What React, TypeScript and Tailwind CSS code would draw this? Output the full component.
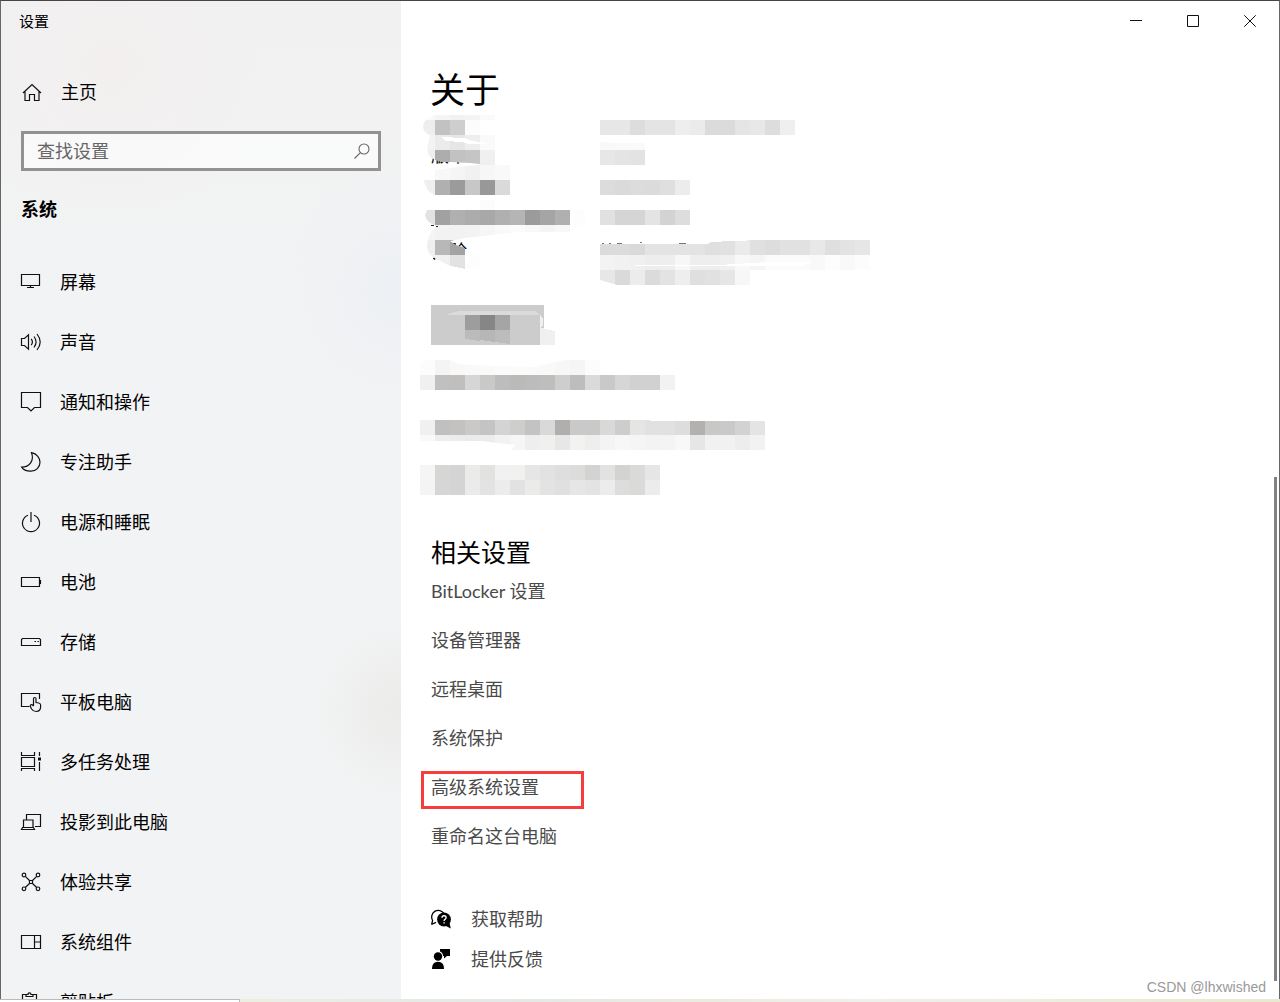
import React from 'react';

interface NavItem {
  label: string;
  icon: React.ReactNode;
}

interface MosaicProps {
  id: string;
  // one string per 15px row, grey cells as two hex digits, tinted cells as six
  rows: string[];
  clip?: string;
  children?: React.ReactNode;
  under?: React.ReactNode;
}

const CELL = 15;

const toColor = (cell: string) => (cell.length === 2 ? `#${cell}${cell}${cell}` : `#${cell}`);

/**
 * Pixelated block used in place of private values
 */
const Mosaic: React.FC<MosaicProps> = ({ id, rows, clip, children, under }) => {
  const grid = rows.map((row) => row.split(' ').filter(Boolean));
  const width = Math.max(...grid.map((row) => row.length)) * CELL;
  const height = grid.length * CELL;

  return (
    <svg
      width={width}
      height={height}
      viewBox={`0 0 ${width} ${height}`}
      shapeRendering="crispEdges"
      className="block shrink-0"
      aria-hidden="true"
    >
      {under}
      {clip && (
        <clipPath id={id}>
          <path d={clip} />
        </clipPath>
      )}
      <g clipPath={clip ? `url(#${id})` : undefined}>
        {grid.map((row, y) =>
          row.map((cell, x) =>
            cell === '--' ? null : (
              <rect
                key={`${x}-${y}`}
                x={x * CELL}
                y={y * CELL}
                width={CELL}
                height={CELL}
                fill={toColor(cell)}
              />
            )
          )
        )}
      </g>
      {children}
    </svg>
  );
};

const LineIcon: React.FC<{ children: React.ReactNode }> = ({ children }) => (
  <svg
    width="20"
    height="20"
    viewBox="0 0 20 20"
    fill="none"
    stroke="#111"
    strokeWidth="1.2"
    className="shrink-0 overflow-visible"
    aria-hidden="true"
  >
    {children}
  </svg>
);

const navItems: NavItem[] = [
  {
    label: '屏幕',
    icon: <path d="M.5 2.5H18.5V13.5H.5ZM9.5 13.5V15.5M6 15.5H13" />,
  },
  {
    label: '声音',
    icon: (
      <path d="M.5 6.5H3.5L7.5 2.8V17.2L3.5 13.5H.5ZM10.2 6.8Q12.6 10 10.2 13.2M13 4.5Q17.2 10 13 15.5M16 2Q22.4 10 16 18" />
    ),
  },
  {
    label: '通知和操作',
    icon: <path d="M.5 .5H19.5V15.5H13.5L10 19L6.5 15.5H.5Z" />,
  },
  {
    label: '专注助手',
    icon: <path d="M10.5 .7C16 1.8 19 6 19 10.2A9 9 0 0 1 10 19.2C6 19.4 2.4 17.8 .7 15.2C8.5 15.2 13.5 8.5 10.5 .7Z" />,
  },
  {
    label: '电源和睡眠',
    icon: <path d="M7 3.2A8.5 8.5 0 1 0 13 3.2M10 0V10" />,
  },
  {
    label: '电池',
    icon: (
      <>
        <path d="M.5 5.5H18.5V14.5H.5Z" />
        <path d="M19.5 8V12" />
      </>
    ),
  },
  {
    label: '存储',
    icon: (
      <>
        <path d="M.5 13.5V7.5L1.5 6.5H18.5L19.5 7.5V13.5Z" />
        <path d="M13.5 9.5H15M16.5 9.5H18" />
      </>
    ),
  },
  {
    label: '平板电脑',
    icon: (
      <>
        <path d="M8.5 14.5H.5V1.5H18.5V7" />
        <path d="M12.5 14V6.8Q12.5 5.5 13.7 5.5Q15 5.5 15 6.8V10.5L17.8 11Q19.6 11.4 19.6 13V14.8Q19.6 19.5 15.2 19.5Q12.2 19.5 10.6 17L9.4 14.6Q8.9 13.2 9.8 12.8Q11 12.4 12.5 14" />
      </>
    ),
  },
  {
    label: '多任务处理',
    icon: (
      <>
        <path d="M.5 0V3.5H13.5V0M.5 5.5H13.5V14.5H.5ZM.5 19V16.5H13.5V19M18.5 0V4M18.5 10V19" />
        <rect x="17" y="5.5" width="3" height="3" fill="#111" stroke="none" />
      </>
    ),
  },
  {
    label: '投影到此电脑',
    icon: <path d="M5.5 7.5V2.5H19.5V14.5H14M2.5 15.5V8H12V15.5M1.5 15.5H12.5L13.5 17.5H.5Z" />,
  },
  {
    label: '体验共享',
    icon: (
      <>
        <circle cx="3" cy="3" r="1.8" />
        <circle cx="17" cy="3" r="1.8" />
        <circle cx="3" cy="16.8" r="1.8" />
        <circle cx="17" cy="16.8" r="1.8" />
        <path d="M8.5 8.5H11.5V11.5H8.5ZM4.3 4.3L8.5 8.5M15.7 4.3L11.5 8.5M4.3 15.5L8.5 11.5M15.7 15.5L11.5 11.5" />
      </>
    ),
  },
  {
    label: '系统组件',
    icon: <path d="M.5 3.5H19.5V16.5H.5ZM13.5 3.5V16.5M13.5 10H19.5" />,
  },
  {
    label: '剪贴板',
    icon: <path d="M5 2.5H1.5V19.5H15.5V2.5H12M5 4.5V2.5H7Q7 .8 8.5 .8Q10 .8 10 2.5H12V4.5Z" />,
  },
];

const relatedLinks = ['BitLocker 设置', '设备管理器', '远程桌面', '系统保护', '高级系统设置', '重命名这台电脑'];

const Sidebar: React.FC = () => (
  <aside className="flex w-100 shrink-0 flex-col overflow-hidden bg-[#f2f3f4] bg-[radial-gradient(circle_at_110px_70px,#f3efef_0,transparent_150px),radial-gradient(circle_at_400px_710px,#ebebe9_0,transparent_90px),radial-gradient(circle_at_400px_290px,#edf0f4_0,transparent_130px),linear-gradient(180deg,#f1f1f1,transparent_30%)]">
    <div className="flex h-10 shrink-0 items-center pl-[18px] text-[15px]">设置</div>

    <a href="#home" className="mt-[31px] flex h-10 shrink-0 items-center gap-[19px] pl-[21px]">
      <LineIcon>
        <path d="M1 11L10 2.5L19 11M3 9.5V18.5H7.5V12.5H12.5V18.5H17V9.5" />
      </LineIcon>
      主页
    </a>

    <label className="mx-5 mt-[19px] flex h-10 shrink-0 items-center border-3 border-[#929292] bg-white/60 pr-2 pl-[13px]">
      <input
        type="text"
        aria-label="查找设置"
        placeholder="查找设置"
        className="min-w-0 flex-1 bg-transparent outline-none placeholder:text-[#666]"
      />
      <svg width="16" height="16" viewBox="0 0 16 16" fill="none" stroke="#666" strokeWidth="1.1" aria-hidden="true">
        <circle cx="10" cy="6" r="5" />
        <path d="M6.4 9.6L.5 15.5" />
      </svg>
    </label>

    <h2 className="mt-[18px] flex h-10 shrink-0 items-center pl-5 font-bold">系统</h2>

    <nav className="mt-[23px] flex flex-col">
      {navItems.map((item) => (
        <a key={item.label} href="#system" className="flex h-15 shrink-0 items-center gap-[19px] pl-5">
          <LineIcon>{item.icon}</LineIcon>
          {item.label}
        </a>
      ))}
    </nav>
  </aside>
);

const WindowControls: React.FC = () => (
  <div className="flex h-10 shrink-0 justify-end pr-px">
    <button type="button" aria-label="最小化" className="flex w-[57px] items-center justify-center">
      <svg width="12" height="12" viewBox="0 0 12 12" stroke="#111">
        <path d="M0 5.5H12" />
      </svg>
    </button>
    <button type="button" aria-label="最大化" className="flex w-[57px] items-center justify-center">
      <svg width="12" height="12" viewBox="0 0 12 12" fill="none" stroke="#111">
        <path d="M.5 .5H11.5V11.5H.5Z" />
      </svg>
    </button>
    <button type="button" aria-label="关闭" className="flex w-[57px] items-center justify-center">
      <svg width="12" height="12" viewBox="0 0 12 12" stroke="#111">
        <path d="M.3 .3L11.7 11.7M11.7 .3L.3 11.7" />
      </svg>
    </button>
  </div>
);

const deviceSpecs = [
  {
    label: (
      <Mosaic
        id="spec-label-1"
        rows={['fa f5 f2 f4 fa', 'ee c2 ce fc']}
        clip="M15 10H75V30H9Q3 27 3 21Q4 13 15 10Z"
      />
    ),
    value: <Mosaic id="spec-value-1" rows={['--', 'e7 e7 dd e4 e4 ee eb db db e5 e8 dd ef']} />,
  },
  {
    label: (
      <Mosaic
        id="spec-label-2"
        rows={['f3 eb e6 ee fa', 'ef ad c2 c5 f0']}
        clip="M10 0H75V30H60V29L50 28L30 27H22L15 25L10 22Q6 16 8 8Z"
        under={
          <text x="11" y="27" fontSize="18">
            版本
          </text>
        }
      >
        <path d="M21 2L45 3L52 6L67 8L66 9H48L42 7L25 6Z" fill="#fff" />
      </Mosaic>
    ),
    value: <Mosaic id="spec-value-2" rows={['f9 fa fa', 'e7 e4 e3']} clip="M0 7H9V8H45V30H0Z" />,
  },
  {
    label: (
      <Mosaic
        id="spec-label-3"
        rows={['-- f8 f5 f1 f7 f9', 'ef b0 9b c7 98 da']}
        clip="M15 5L30 3L45 1L60 0H90V30H15Q6 27 4 16V15H15Z"
      />
    ),
    value: <Mosaic id="spec-value-3" rows={['--', 'dc da dc db df ec']} />,
  },
  {
    label: (
      <Mosaic
        id="spec-label-4"
        rows={['-- -- -- -- fc', 'e2 a1 b0 ac a8 b0 b5 9b a5 b0 fd']}
        clip="M60 5H75V15H165V30H14Q6 27 5 20L7 15H60Z"
      />
    ),
    value: <Mosaic id="spec-value-4" rows={['--', 'e1 d5 d5 e4 d3 dd']} />,
  },
  {
    label: (
      <Mosaic
        id="spec-label-5"
        rows={['f5 f2 f2 f3 f6 f9 fb f8 f5 f8', 'ef b8 a3', 'f0 f0 e2 fd', '--']}
        clip="M15 0H150V7L100 7L80 9L45 13L30 16L36 20L45 23V30H60V43L45 44L30 41L18 35Q7 30 7 20Q8 10 15 2Z"
        under={
          <text x="11" y="33" fontSize="18">
            体验
          </text>
        }
      >
        <path d="M11 35L18 35L30 41L45 44V48H11ZM45 24H50V36H45Z" fill="#fff" />
        <path d="M11 .5H14M16 1.5H18M13 33.5H15" stroke="#222" />
      </Mosaic>
    ),
    value: (
      <Mosaic
        id="spec-value-5"
        rows={[
          '--',
          'db dc d9 e3 e3 e3 e3 df e1 eb e0 dd e1 e1 e8 df e3 e6',
          'f3 f1 f0 ed ee f7 ee ee f0 f8 f5 fb fb fb f9 fd f9 fc',
          'e7 da ec db e3 ee df e1 e6 f7',
        ]}
        clip="M0 19H108L111 17H122V16H147V15H270V45H150V60H17L0 55Z"
      >
        <path d="M35 40H127V39H144V38H159V37H213V38H209V39H203V41H35Z" fill="#fff" />
        <path d="M2 18.5H4M9 18.5H11M17 18.5H22M40 17.5H42M79 18.5H86" stroke="#777" />
      </Mosaic>
    ),
  },
];

const DeviceSpecs: React.FC = () => (
  <div className="flex flex-col">
    {deviceSpecs.map((spec, index) => (
      <div key={index} className="flex">
        <div className="w-45 shrink-0">{spec.label}</div>
        {spec.value}
      </div>
    ))}
  </div>
);

const RelatedSettings: React.FC = () => (
  <section className="mt-[43px] pl-[11px]">
    <h2 className="text-[25px] leading-7">相关设置</h2>
    <ul>
      {relatedLinks.map((label) => (
        <li key={label} className="relative flex h-[49px] items-center">
          <a href="#related" className="text-[#4a4a4a]">
            {label}
          </a>
          {label === '高级系统设置' && (
            <span className="pointer-events-none absolute top-[9px] -left-[10px] h-[38px] w-[163px] border-3 border-[#f73c3c]" />
          )}
        </li>
      ))}
    </ul>
  </section>
);

const HelpLinks: React.FC = () => (
  <div className="mt-[39px] flex flex-col pl-[10px]">
    <a href="#help" className="flex h-10 items-center gap-5 text-[#4a4a4a]">
      <svg width="21" height="20" viewBox="0 0 21 20" aria-hidden="true">
        <path
          d="M1.6 15.5L2.6 11.6A6.6 6.6 0 1 1 14 4.6M1.4 15.5L6 13.4"
          fill="none"
          stroke="#000"
          strokeWidth="1.3"
        />
        <circle cx="14" cy="10.5" r="6.9" fill="#000" />
        <path d="M15 16.5L20.8 19.6L19.4 13.5Z" fill="#000" />
        <path
          d="M12 8.8Q12 6.7 14.1 6.7Q16.1 6.7 16.1 8.5Q16.1 9.6 15 10.3Q14.1 11 14.1 12M14.1 13.2V14.6"
          fill="none"
          stroke="#fff"
          strokeWidth="1.4"
        />
      </svg>
      获取帮助
    </a>
    <a href="#feedback" className="flex h-10 items-center gap-5 text-[#4a4a4a]">
      <svg width="21" height="20" viewBox="0 0 21 20" aria-hidden="true">
        <circle cx="8" cy="7.5" r="4.2" />
        <path d="M2 20Q2 12.7 8 12.7Q14 12.7 14 20Z" />
        <path d="M10 0H20V7H17L14 9.6V7H13Q13 3.4 10 2.4Z" />
      </svg>
      提供反馈
    </a>
  </div>
);

const AboutPage: React.FC = () => (
  <main className="relative flex min-w-0 flex-1 flex-col overflow-hidden bg-white">
    <WindowControls />

    <div className="mt-[34px] flex flex-col pl-[19px]">
      <h1 className="mb-[2px] pl-[10px] text-[35px] leading-7">关于</h1>
      <DeviceSpecs />

      <button type="button" aria-label="重命名" className="mt-5 ml-[11px] h-10 w-[113px] bg-[#ccc]">
        <svg width="124" height="40" viewBox="0 0 124 40" shapeRendering="crispEdges" className="block" aria-hidden="true">
          <path d="M17 9L28 6H104L109 10H17Z" fill="#dbdbdb" />
          <path d="M34 10H49V25H34Z" fill="#9d9d9d" />
          <path d="M49 10H64V25H49Z" fill="#868686" />
          <path d="M64 10H79V25H64Z" fill="#a5a5a5" />
          <path d="M34 25H49V36L34 34Z" fill="#bbb" />
          <path d="M49 25H64V37L49 35Z" fill="#b6b6b6" />
          <path d="M64 25H79V39L64 37Z" fill="#bcbcbc" />
          <path d="M109 9L112 14V20L109 23Z" fill="#f0f0f0" />
          <path d="M109 23H113V40H109Z" fill="#f0f0f0" />
          <path d="M113 24L124 26V40H113Z" fill="#f0f0f0" />
        </svg>
      </button>

      <div className="mt-[15px]">
        <Mosaic
          id="support-1"
          rows={[
            'fc f4 f8 f9 fa fb fb fa f9 f7 f5 fc',
            'f0 c0c0be c0bfbe d6 c9c9c7 bd bbbab9 bc bfbebd cececc bd da c9 d6d6d4 d1 d1 f2',
          ]}
          clip="M5 0H30L38 4L70 6L115 7L135 2L145 0H180V15H255V30H0V3Z"
        />
      </div>
      <div className="mt-[30px]">
        <Mosaic
          id="support-2"
          rows={[
            'f0 c0 c3c2c0 cac9c7 c4 d4 cececc c3 d9 b0afae c9 c9c9c7 d9d9d7 cd e5e5e4 e1 e1 dd b2b1b0 c8c8c7 c9 d2 e4',
            'f9 ee ec eb ec f2 f6 ee f0f0ee e7 f2f2f0 ee f4 f7 f5 f3 f4 f8 e6 f1 f1 ed f2',
          ]}
          clip="M0 0H230V1H345V30H91L95 25L78 23L62 21H0Z"
        />
      </div>
      <div className="mt-[15px]">
        <Mosaic
          id="support-3"
          rows={[
            'f5 d6d6d5 d4 ebebe9 e2e2e1 f1 f1f1ef e6 e2 de dcdcdb d3 e2 d3d3d2 dadad8 e6',
            'f4 d6 d4 eb e3 ec e2 ebebea e3 e0 e6 e3 ec dd dadad8 ec',
          ]}
        />
      </div>

      <RelatedSettings />
      <HelpLinks />
    </div>

    {/* Scroll thumb */}
    <div className="absolute right-[2px] bottom-[18px] h-[504px] w-[3px] bg-[#828282]" />
  </main>
);

const App: React.FC = () => (
  <div
    lang="zh-CN"
    className="relative flex h-screen flex-col overflow-hidden bg-white font-[Lato,'Noto_Sans_CJK_SC',sans-serif] text-[18px] leading-6 text-black"
  >
    <div className="flex min-h-0 flex-1 border-x border-t border-[#666] border-t-[#484446]">
      <Sidebar />
      <AboutPage />
    </div>

    {/* Sliver of the desktop under the window */}
    <div className="flex h-[3px] shrink-0">
      <div className="w-60 border-t border-r border-[#bbb] bg-white" />
      <div className="flex-1 bg-[linear-gradient(90deg,#eeeee0,#e4e8e6_25%,#ecebdd_45%,#f0f0ea_60%,#ebe8cf)]" />
    </div>

    <div className="absolute right-[14px] bottom-[5px] font-['Liberation_Sans',sans-serif] text-[14px] leading-5 text-[#999]">
      CSDN @lhxwished
    </div>
  </div>
);

export default App;
